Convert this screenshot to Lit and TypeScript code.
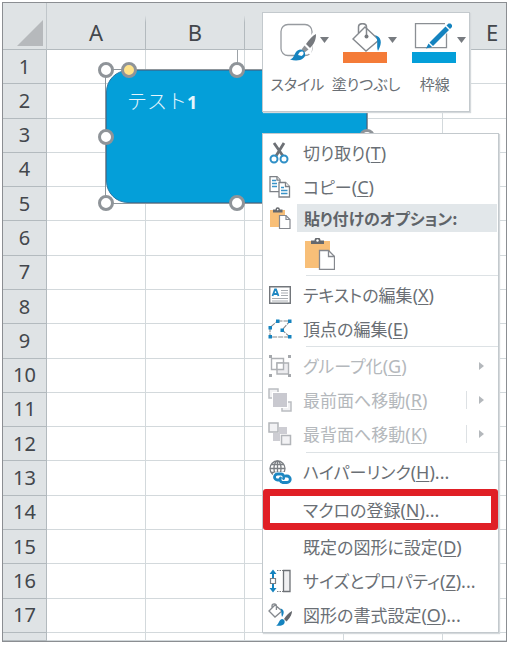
import { LitElement, html, css, nothing, TemplateResult } from "lit";
import { customElement } from "lit/decorators.js";

const icons: Record<string, TemplateResult> = {
  cut: html`<svg width="22" height="22" viewBox="0 0 22 22" fill="none">
    <path d="M5 1 14 14M15 1 7 14" stroke="#6d7075" stroke-width="2.800" />
    <circle cx="5" cy="17" r="3.500" stroke="#2f8fc6" stroke-width="2" />
    <circle cx="15" cy="17" r="3.500" stroke="#2f8fc6" stroke-width="2" />
  </svg>`,
  copy: html`<svg width="22" height="22" viewBox="0 0 22 22">
    <g fill="#fff" stroke="#7c8086" stroke-width="1.3">
      <path d="M1 .700h7l3 3v12H1z" /><path d="M8 .700v3.500h3" />
      <path d="M10 6.500h6.500l4 4v10.500H10z" /><path d="M16.500 6.500v4h4" />
    </g>
    <path d="M3 4.500h4M3 7.500h5M3 10.500h5M12 11.500h3M12 14.500h6.500M12 17.500h6.500" stroke="#3a93c8" stroke-width="1.400" />
  </svg>`,
  paste: html`<svg width="22" height="22" viewBox="0 0 22 22">
    <path d="M1 3h15v17H1z" fill="#f8bf78" />
    <path d="M4 5.500V2.500h2.500a2.200 2.200 0 0 1 4.400 0H13.500v3z" fill="#65686d" />
    <circle cx="8.700" cy="2.600" r=".8" fill="#fff" />
    <path d="M10.500 8.500h6.500l4 4v9h-10.500z" fill="#fff" stroke="#85888e" stroke-width="1.200" />
    <path d="M17 8.500v4h4" fill="none" stroke="#85888e" stroke-width="1.200" />
  </svg>`,
  pasteLarge: html`<svg width="30" height="32" viewBox="0 0 30 32">
    <path d="M0 3h25v27H0z" fill="#f8bf78" />
    <path d="M6 6V2.500h3.500a3 3 0 0 1 6 0H19V6z" fill="#65686d" />
    <circle cx="12.500" cy="2.500" r="1.200" fill="#fff" />
    <path d="M14.500 12.500h9l6 6v13h-15z" fill="#fff" stroke="#85888e" stroke-width="1.300" />
    <path d="M23.500 12.500v6h6" fill="none" stroke="#85888e" stroke-width="1.300" />
  </svg>`,
  text: html`<svg width="22" height="18" viewBox="0 0 22 18">
    <path d="M.700.700h20.600v16.600H.7z" fill="#fff" stroke="#72767b" stroke-width="1.400" />
    <path d="M3.500 10 6 3.500h1L9.500 10M5 8h4" fill="none" stroke="#1d87c2" stroke-width="1.800" />
    <path d="M12 4.500h7M12 7h7M12 9.500h7M3 12.500h16M3 15h16" stroke="#a9adb2" />
  </svg>`,
  points: html`<svg width="24" height="20" viewBox="0 0 24 20">
    <path d="M9.500 2H22L14 11l8 7H2V8.500z" fill="none" stroke="#85898e" stroke-width="1.100" stroke-dasharray="5 1" />
    <path d="M8 .500h3.500v3.500H8zM20 .500h3.500v3.500H20zM.500 7H4v3.500H.500zM12.500 9.500H16V13h-3.500zM.500 16H4v3.500H.500zM20 16h3.500v3.500H20z" fill="#1583bf" />
  </svg>`,
  group: html`<svg width="22" height="22" viewBox="0 0 22 22">
    <g fill="none" stroke="#aeb1b5" stroke-width="1.400">
      <path d="M2.500 3.500h12v11h-12z" /><path d="M8 8h11.500v11H8z" fill="#ececef" /><path d="M8 8h6.500v6.500H8z" fill="#fff" />
    </g>
    <path d="M0 0h3v3H0zM19 0h3v3h-3zM0 19h3v3H0zM19 19h3v3h-3z" fill="#a5a8ac" />
  </svg>`,
  front: html`<svg width="24" height="24" viewBox="0 0 24 24">
    <path d="M1 1h9v9H1zM14 14h9v9h-9z" fill="#f2f2f4" stroke="#babdc1" stroke-width="1.500" />
    <path d="M4 4h16v16H4z" fill="#fff" /><path d="M5 5h14v14H5z" fill="#c9c9d0" />
  </svg>`,
  back: html`<svg width="24" height="24" viewBox="0 0 24 24">
    <path d="M5 5h14v14H5z" fill="#cdcdd3" />
    <path d="M0 0h11v11H0zM12 12h12v12H12z" fill="#fff" />
    <path d="M1 1h9v9H1zM13.500 13.500h9v9h-9z" fill="#f2f2f4" stroke="#b2b5b9" stroke-width="1.500" />
  </svg>`,
  link: html`<svg width="24" height="24" viewBox="0 0 24 24" fill="none">
    <g stroke="#7b7f84" stroke-width="1.300">
      <circle cx="9.500" cy="8.500" r="7.500" /><ellipse cx="9.500" cy="8.500" rx="3.500" ry="7.500" />
      <path d="M9.500 1v15M2 8.500h15M3.500 4.500h12M3.500 12.500h12" />
    </g>
    <path d="M5 15c0-3 3-3 5-3h7c6 0 8 4 7 12H10c-4 0-5-4-5-9z" fill="#fff" />
    <g stroke="#1d87c2" stroke-width="2.800" stroke-linecap="round">
      <path d="M11 20H9.500a3 3 0 0 1 0-6H13a3 3 0 0 1 2.500 4.500" />
      <path d="M18 16h1a3 3 0 0 1 0 6.500h-4.500a3 3 0 0 1-2-4.500" />
    </g>
  </svg>`,
  size: html`<svg width="24" height="24" viewBox="0 0 24 24" fill="none">
    <path d="M5 2v7M5 15v7" stroke="#1583bf" stroke-width="2" />
    <path d="M1.500 5 5 .500 8.500 5zM1.500 19 5 23.500 8.500 19z" fill="#1583bf" />
    <path d="M2.500 9.500h5v5h-5z" stroke="#7b7f84" stroke-width="1.200" />
    <path d="M9 1.500h6M9 22.500h6" stroke="#7b7f84" stroke-dasharray="1.500 1" />
    <path d="M15.500 1.500h6.500v21h-6.500z" fill="#f0f0f2" stroke="#6d7176" stroke-width="1.300" />
  </svg>`,
  format: html`<svg width="24" height="24" viewBox="0 0 24 24" fill="none">
    <path d="M1 8 7 2l7 6-7 6zM4 5.500V3a2.200 2.200 0 0 1 4.400 0v4" stroke="#85898e" stroke-width="1.300" />
    <path d="M12.500 5.500c4 1 4 5 1.500 8.500-1-3 0-5-1.500-8.500z" fill="#1583bf" />
    <path d="M24 8c-4 2-6 5-8 8l2.500 2.500C21 16 24 12 24 8z" fill="#65686d" />
    <path d="M8 22.500c3-.5 2.500-6 6-6.500 3 0 3.500 4 1.500 5.500-2 1.500-5 1.500-7.500 1z" fill="#1583bf" />
  </svg>`,
  style: html`<svg width="44" height="40" viewBox="-5 0 44 40" fill="none">
    <rect x="1" y="1.500" width="31" height="31" rx="7" stroke="#979ba0" stroke-width="1.300" />
    <path d="M34 8 21 26l10 6 4-22z" fill="#fff" />
    <path d="M36 11c-4 2-7 6-10 10l4 4c4-4 6-8 6-14z" fill="#76797e" />
    <path d="m24.500 22.500 4 4-4 3-3-3z" fill="#8f9398" />
    <path d="M10 36.500c5-1 4-9 10-10 5 0 7 6 3.500 8.500C20 38 15 38 10 36.500z" fill="#1583bf" />
    <path d="M18 32c1-3 3-4 4.500-3.500 2 1 1 3.500-1 4.500z" fill="#fff" />
  </svg>`,
  fill: html`<svg width="44" height="40" viewBox="0 0 44 40" fill="none">
    <path d="M10 16 22 4l14 13-13 11z" stroke="#85898e" stroke-width="1.400" />
    <path d="M15.500 10V4c0-4.500 8-4.500 8 0v10" stroke="#85898e" stroke-width="1.500" />
    <circle cx="23.500" cy="13.500" r="2" fill="#76797e" />
    <path d="M32 12c6 2 8 7 3 16-2-5 1-11-3-16z" fill="#1583bf" />
    <path d="M0 29h44v11H0z" fill="#f47b38" />
  </svg>`,
  outline: html`<svg width="44" height="40" viewBox="0 0 44 40" fill="none">
    <path d="M33 .700H3.500v24h31v-15" stroke="#8b8f94" stroke-width="1.300" />
    <path d="m18 21.500 17-17" stroke="#fff" stroke-width="8" />
    <path d="m17.500 19.500 16-16 3.500 3.500-16 16z" fill="#1583bf" />
    <path d="m16.500 20.500 3.500 3.500-6 1.500z" fill="#1583bf" />
    <path d="m34.500 2.500 2-2h2l1.500 1.500v2l-2 2z" fill="#1583bf" />
    <path d="M0 29h44v11H0z" fill="#049fd9" />
  </svg>`,
};

interface Item {
  label: string;
  access: string;
  icon?: string;
  more?: boolean;
  disabled?: boolean;
  submenu?: boolean;
  split?: boolean;
  marked?: boolean;
}

const editItems: Item[] = [
  { label: "切り取り", access: "T", icon: "cut" },
  { label: "コピー", access: "C", icon: "copy" },
];
const textItems: Item[] = [
  { label: "テキストの編集", access: "X", icon: "text" },
  { label: "頂点の編集", access: "E", icon: "points" },
];
const orderItems: Item[] = [
  { label: "グループ化", access: "G", icon: "group", disabled: true, submenu: true },
  { label: "最前面へ移動", access: "R", icon: "front", disabled: true, submenu: true, split: true },
  { label: "最背面へ移動", access: "K", icon: "back", disabled: true, submenu: true, split: true },
];
const shapeItems: Item[] = [
  { label: "ハイパーリンク", access: "H", icon: "link", more: true },
  { label: "マクロの登録", access: "N", more: true, marked: true },
  { label: "既定の図形に設定", access: "D" },
  { label: "サイズとプロパティ", access: "Z", icon: "size", more: true },
  { label: "図形の書式設定", access: "O", icon: "format", more: true },
];

@customElement("sheet-grid")
class SheetGrid extends LitElement {
  static styles = css`
    :host { display: block; height: 100%; }
    .grid {
      width: 539px;
      height: 100%;
      table-layout: fixed;
      border-collapse: separate;
      border-spacing: 0;
      font-family: "Noto Sans", sans-serif;
      color: #43474c;
    }
    .corner-col { width: 44px; }
    .cell, .head, .number, .corner {
      box-sizing: border-box;
      padding: 0;
      border: solid #d3d9dc;
      border-width: 0 1px 1px 0;
      font-weight: 400;
    }
    .head, .corner {
      height: 47px;
      background: #dfe3e5;
      border-color: #b3babe;
      font-size: 22px;
      line-height: 24px;
      vertical-align: bottom;
      padding-bottom: 5px;
    }
    .head { border-image: linear-gradient(#dfe3e5 13px, #b3babe 20px) 1; }
    .corner { padding: 0 3px 3px 0; border-right-color: #c0c6ca; }
    .corner svg { display: block; margin-left: auto; }
    .number {
      background: #dfe3e5;
      border-color: #b3babe;
      font-size: 20px;
      line-height: 24px;
    }
    .tail { height: 8px; }
  `;

  render() {
    return html`<table class="grid">
      <colgroup><col class="corner-col" /><col span="5" /></colgroup>
      <thead>
        <tr>
          <td class="corner"><svg width="26" height="26"><path d="M26 0v26H0z" fill="#b6b9bc" /></svg></td>
          ${["A", "B", "C", "D", "E"].map((c) => html`<th class="head" scope="col">${c}</th>`)}
        </tr>
      </thead>
      <tbody>
        ${Array.from({ length: 17 }, (_, i) => html`<tr>
          <th class="number" scope="row">${i + 1}</th>
          ${[0, 1, 2, 3, 4].map(() => html`<td class="cell"></td>`)}
        </tr>`)}
        <tr>
          <th class="number tail"></th>
          ${[0, 1, 2, 3, 4].map(() => html`<td class="cell tail"></td>`)}
        </tr>
      </tbody>
    </table>`;
  }
}

@customElement("shape-box")
class ShapeBox extends LitElement {
  static styles = css`
    :host { display: block; }
    .frame {
      position: relative;
      box-sizing: border-box;
      height: 100%;
      border: 1px solid #8d959b;
    }
    .body {
      box-sizing: border-box;
      height: 100%;
      padding: 16px 20px;
      border: 1px solid #2a78a5;
      border-radius: 22px;
      background: #049fd9;
      color: #e6f5fc;
      font: 300 20px/28px "Noto Sans CJK JP", sans-serif;
    }
    .digit { font: 700 18px/28px "Noto Sans", sans-serif; }
    .stem { position: absolute; left: 50%; bottom: 100%; width: 1px; height: 20px; background: #9da3a8; }
    .handles {
      position: absolute;
      inset: -8px;
      display: grid;
      grid-template-columns: repeat(3, 16px);
      grid-template-rows: repeat(3, 16px);
      place-content: space-between;
    }
    .handle {
      box-sizing: border-box;
      width: 16px;
      height: 16px;
      border: 3px solid #8f9499;
      border-radius: 50%;
      background: #fff;
    }
    .centre { visibility: hidden; }
    .adjust { position: absolute; left: 23px; top: 0; background: #ffe38a; }
  `;

  render() {
    return html`<div class="frame">
      <div class="body">テスト<span class="digit">1</span></div>
      <div class="stem"></div>
      <div class="handles">
        ${Array.from({ length: 9 }, (_, i) => html`<span class="handle ${i === 4 ? "centre" : ""}"></span>`)}
        <span class="handle adjust"></span>
      </div>
    </div>`;
  }
}

@customElement("mini-toolbar")
class MiniToolbar extends LitElement {
  static styles = css`
    :host {
      display: grid;
      grid-template-columns: repeat(3, 1fr);
      align-items: start;
      box-sizing: border-box;
      padding-top: 10px;
      background: #fff;
      border: 1px solid #c3c9cd;
      box-shadow: 1px 1px 1px #d5d9dc;
    }
    .tool {
      display: flex;
      flex-direction: column;
      align-items: center;
      gap: 9px;
      padding: 0;
      border: 0;
      background: none;
      color: #6a6f75;
      font: 15px/24px "Noto Sans CJK JP", sans-serif;
      font-feature-settings: "palt";
      white-space: nowrap;
    }
    .picture { display: flex; gap: 1px; padding-left: 9px; }
    .arrow { margin-top: 14px; }
    svg { display: block; flex: none; }
  `;

  render() {
    const tools = [
      { icon: "style", label: "スタイル" },
      { icon: "fill", label: "塗りつぶし" },
      { icon: "outline", label: "枠線" },
    ];
    return tools.map((t) => html`<button class="tool" type="button">
      <span class="picture">${icons[t.icon]}
        <svg class="arrow" width="9" height="6"><path d="M0 0h9L4.500 6z" fill="#777b80" /></svg>
      </span>
      <span>${t.label}</span>
    </button>`);
  }
}

@customElement("context-menu")
class ContextMenu extends LitElement {
  static styles = css`
    :host {
      display: block;
      box-sizing: border-box;
      padding-top: 2px;
      background: #fff;
      border: 1px solid #c3c9cd;
      box-shadow: 1px 1px 1px #d5d9dc;
      font: 17px/24px "Noto Sans CJK JP", sans-serif;
      font-feature-settings: "palt";
      color: #6a6f75;
    }
    .item {
      display: flex;
      align-items: center;
      box-sizing: border-box;
      width: 100%;
      height: 34px;
      padding: 0 13px 0 0;
      border: 0;
      background: none;
      color: inherit;
      font: inherit;
      font-feature-settings: inherit;
      text-align: left;
      white-space: nowrap;
    }
    .item:disabled { color: #b4b8bc; }
    .icon { display: flex; justify-content: center; flex: none; width: 34px; }
    .label { flex: 1; padding-left: 6px; }
    .latin { font: 18px/24px "Noto Sans", sans-serif; }
    .access { text-decoration: underline; text-decoration-thickness: 1px; text-underline-offset: 2px; }
    .marked {
      height: 41px;
      border: 7px solid #e01f26;
      border-radius: 3px;
      padding: 0;
    }
    .marked .icon { width: 27px; }
    .split { width: 1px; height: 18px; margin-right: 12px; background: #dde1e4; }
    .rule { height: 1px; margin: 0 0 2px 43px; border: 0; background: #dde2e5; }
    .group { padding-bottom: 1px; }
    .heading { display: flex; align-items: center; height: 28px; }
    .title {
      flex: 1;
      margin: 0 1px 0 0;
      padding-left: 7px;
      background: #e2e7ea;
      color: #5f6469;
      font-size: 16px;
      line-height: 28px;
      font-weight: 700;
    }
    .paste { display: block; height: 43px; padding: 0 0 0 42px; border: 0; background: none; }
    svg { display: block; }
  `;

  private item(i: Item) {
    return html`<button class="item ${i.marked ? "marked" : ""}" type="button" role="menuitem" ?disabled=${i.disabled}>
      <span class="icon">${i.icon ? icons[i.icon] : nothing}</span>
      <span class="label">${i.label}<span class="latin">(<span class="access">${i.access}</span>)${i.more ? "..." : ""}</span></span>
      ${i.split ? html`<span class="split"></span>` : nothing}
      ${i.submenu ? html`<svg width="6" height="8"><path d="M0 0v8l5-4z" fill="#b4b8bc" /></svg>` : nothing}
    </button>`;
  }

  render() {
    return html`
      ${editItems.map((i) => this.item(i))}
      <div class="heading"><span class="icon">${icons.paste}</span><h2 class="title">貼り付けのオプション:</h2></div>
      <button class="paste" type="button" aria-label="貼り付け">${icons.pasteLarge}</button>
      <hr class="rule" />
      <div>${textItems.map((i) => this.item(i))}</div>
      <hr class="rule" />
      <div class="group">${orderItems.map((i) => this.item(i))}</div>
      <hr class="rule" />
      <div>${shapeItems.map((i) => this.item(i))}</div>
    `;
  }
}

@customElement("app-root")
class AppRoot extends LitElement {
  static styles = css`
    :host { display: block; padding: 2px 3px 3px 2px; background: #fff; }
    .window {
      position: relative;
      box-sizing: border-box;
      height: calc(100vh - 5px);
      min-height: 640px;
      border: 1px solid #8b8e92;
      overflow: hidden;
      background: #fff;
    }
    .shape { position: absolute; left: 102px; top: 66px; width: 263px; height: 135px; }
    .toolbar { position: absolute; left: 259px; top: 9px; width: 208px; height: 100px; }
    .menu { position: absolute; left: 259px; top: 130px; width: 237px; }
  `;

  render() {
    return html`<main class="window">
      <sheet-grid></sheet-grid>
      <shape-box class="shape"></shape-box>
      <mini-toolbar class="toolbar"></mini-toolbar>
      <context-menu class="menu" role="menu"></context-menu>
    </main>`;
  }
}
